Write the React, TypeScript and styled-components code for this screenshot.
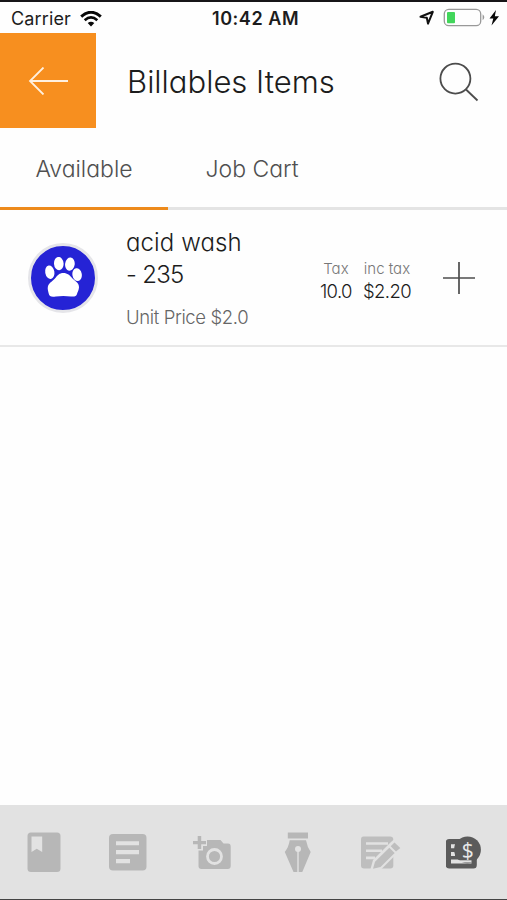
import React from 'react';
import styled, { createGlobalStyle } from 'styled-components';

const GlobalStyle = createGlobalStyle`
  *, *::before, *::after { box-sizing: border-box; }
  html, body { margin: 0; padding: 0; background: #fff; }
  body { font-family: Inter, "Liberation Sans", sans-serif; color: #1c1c1c; }
  button { border: 0; padding: 0; background: none; font: inherit; color: inherit; }
  svg { display: block; flex: none; }
`;

const Screen = styled.div`
  width: 507px;
  height: 900px;
  display: flex;
  flex-direction: column;
  overflow: hidden;
  background: #fefefe;
  border-top: 2px solid #171518;
  border-bottom: 1px solid #444;
  font-feature-settings: 'cv11' 1;
  white-space: nowrap;
`;

const StatusBar = styled.div`
  height: 31px;
  flex: none;
  display: grid;
  grid-template-columns: 1fr auto 1fr;
  align-items: center;
  padding: 0 7px 0 11px;
  font-feature-settings: normal;
`;

const Carrier = styled.div`
  display: flex;
  align-items: center;
  gap: 9px;
  font-size: 18px;
  line-height: 30px;
  padding-top: 1px;
  letter-spacing: 0.15px;
`;

const Clock = styled.div`
  font-size: 18px;
  line-height: 30px;
  padding-top: 2px;
  font-weight: 600;
  letter-spacing: 0.55px;
`;

const Indicators = styled.div`
  display: flex;
  justify-content: flex-end;
  align-items: center;
`;

const Header = styled.header`
  height: 95px;
  flex: none;
  display: flex;
  align-items: center;
`;

const BackButton = styled.button`
  width: 96px;
  height: 95px;
  background: #f78f1f;
  display: flex;
  align-items: center;
  justify-content: center;
`;

const Title = styled.h1`
  flex: 1;
  margin: 0 0 0 31px;
  padding-top: 2px;
  font-size: 31px;
  line-height: 40px;
  font-weight: 300;
`;

const SearchButton = styled.button`
  margin: 2px 28px 0 0;
`;

const Tabs = styled.nav`
  height: 82px;
  flex: none;
  display: flex;
  box-shadow: inset 0 -3px 0 #e4e4e4;
`;

const Tab = styled.button<{ $active?: boolean }>`
  width: 168px;
  height: 82px;
  padding-top: 2px;
  border-bottom: 3px solid ${(p) => (p.$active ? '#ed8a1b' : 'transparent')};
  color: #505050;
  font-size: 23px;
  line-height: 30px;
  font-weight: 300;
`;

const ItemRow = styled.article`
  height: 137px;
  flex: none;
  display: flex;
  align-items: center;
  padding: 0 32px 0 28px;
  border-bottom: 2px solid #e8e8e8;
`;

const Avatar = styled.div`
  width: 70px;
  height: 70px;
  border-radius: 50%;
  border: 3px solid #e5e5e9;
  background: #2523d5;
  display: flex;
  align-items: center;
  justify-content: center;
`;

const Description = styled.div`
  margin-left: 28px;
  width: 180px;
`;

const ItemName = styled.div`
  padding-top: 1px;
  font-size: 24px;
  line-height: 32px;
  font-weight: 300;
`;

const NameLine = styled.span<{ $spacing: number }>`
  display: block;
  letter-spacing: ${(p) => p.$spacing}px;
`;

const UnitPrice = styled.div`
  margin-top: 14px;
  font-size: 18.5px;
  line-height: 24px;
  font-weight: 300;
  color: #666;
  letter-spacing: -0.37px;
`;

const Amounts = styled.dl`
  margin: 6px 0 0;
  flex: 1;
  display: flex;
  justify-content: flex-end;
  gap: 11px;
`;

const Amount = styled.div`
  display: flex;
  flex-direction: column;
  align-items: center;
`;

const AmountLabel = styled.dt`
  font-size: 15px;
  line-height: 20px;
  font-weight: 300;
  color: #777;
`;

const AmountValue = styled.dd`
  margin: 0;
  font-size: 18.5px;
  line-height: 24px;
  font-weight: 300;
  letter-spacing: -0.6px;
`;

const AddButton = styled.button`
  margin-left: 32px;
`;

const Toolbar = styled.footer`
  height: 94px;
  flex: none;
  margin-top: auto;
  padding-left: 2px;
  display: grid;
  grid-template-columns: repeat(6, 1fr);
  background: #e2e2e2;
`;

const Tool = styled.button<{ $tone: string }>`
  display: flex;
  align-items: center;
  justify-content: center;
  color: ${(p) => p.$tone};
`;

const WifiIcon = () => (
  <svg width="22" height="16" viewBox="0 0 22 16" fill="none" stroke="#080808">
    <path d="M1.2 5.6 Q11 -3 20.8 5.6" strokeWidth="3" />
    <path d="M4.7 9.2 Q11 3.6 17.3 9.2" strokeWidth="2.7" />
    <path d="M7.7 12.1 Q11 9.2 14.3 12.1 L11 15.4 Z" fill="#080808" stroke="none" />
  </svg>
);

const StatusIcons = () => (
  <svg width="82" height="20" viewBox="418 8 82 20">
    <path d="M420.5 16.8 L432.8 11.8 L428 23.6 L426.8 17.8 Z" fill="none" stroke="#111" strokeWidth="2" strokeLinejoin="round" />
    <rect x="444.3" y="9.3" width="36.4" height="16.4" rx="4.5" fill="none" stroke="#999" strokeWidth="1.3" />
    <rect x="447" y="12" width="8" height="11.2" rx="1" fill="#42d65b" />
    <path d="M482.6 14.3 Q486 17.3 482.6 20.3 Z" fill="#999" />
    <path d="M496 10 L489.5 18.5 H493.3 L491.5 25.5 L499 16.2 H494.8 Z" fill="#080808" />
  </svg>
);

const ArrowIcon = () => (
  <svg width="40" height="28" viewBox="0 0 40 28" fill="none" stroke="#fff0df" strokeWidth="1.8">
    <path d="M15.5 .5 L2 14 L15.5 27.5 M2 14 H40.5" />
  </svg>
);

const SearchIcon = () => (
  <svg width="40" height="40" viewBox="0 0 40 40" fill="none" stroke="#4c4c4c" strokeWidth="1.8">
    <circle cx="16.4" cy="16.6" r="15" />
    <path d="M27 27.5 L38.5 38.5" />
  </svg>
);

const PawIcon = () => (
  <svg width="38" height="42" viewBox="44 257 38 42" fill="#fff">
    <ellipse cx="49.8" cy="272.2" rx="4.6" ry="6.8" transform="rotate(-10 49.8 272.2)" />
    <ellipse cx="58.8" cy="263.6" rx="4.8" ry="6.7" transform="rotate(-4 58.8 263.6)" />
    <ellipse cx="69.9" cy="264.1" rx="4.8" ry="6.6" transform="rotate(8 69.9 264.1)" />
    <ellipse cx="77.1" cy="274.6" rx="4.7" ry="6.4" transform="rotate(-10 77.1 274.6)" />
    <path d="M63.3 273 C67.5 273 70 275.5 72 278 C74.5 281 79.3 282.5 79 287.5 C78.7 290.5 77.5 292 77 294 C76.3 296.7 74 296.8 71 296.5 C66 295.8 60.5 295.8 55.8 296.5 C51.3 297.2 49.3 296.5 48.7 293.5 C48.2 291.3 47.3 289 47.9 286.5 C49 282.5 53 281 55.4 278 C57.5 275.3 59.5 273 63.3 273 Z" />
  </svg>
);

const PlusIcon = () => (
  <svg width="32" height="32" viewBox="0 0 32 32" stroke="#4d4d4d" strokeWidth="1.7">
    <path d="M16 0 V32 M0 16 H32" />
  </svg>
);

const JournalIcon = () => (
  <svg width="34" height="40" viewBox="26.5 832 34 40">
    <rect x="27" y="832.5" width="33" height="39.5" rx="3.5" fill="currentColor" />
    <path d="M31 836.5 H41.7 V852 L36.3 848.8 L31 852 Z" fill="#e2e2e2" />
  </svg>
);

const NotesIcon = () => (
  <svg width="38" height="38" viewBox="109 833 38 38">
    <rect x="109" y="834" width="37.5" height="36.5" rx="4" fill="currentColor" />
    <path d="M116 841.2 H139 V845.2 H116 Z M116 850 H139 V854.3 H116 Z M116 859 H130 V863.3 H116 Z" fill="#e2e2e2" />
  </svg>
);

const CameraIcon = () => (
  <svg width="38" height="36" viewBox="193 834 38 36">
    <path d="M207 840 H220.5 L223.5 843.5 H228 Q230.7 843.5 230.7 846.5 V866 Q230.7 869 227.7 869 H201.5 Q198.5 869 198.5 866 V850.5 H203 V846 H207 Z" fill="currentColor" />
    <path d="M197.7 836 H201.2 V841 H206 V844.3 H201.2 V849 H197.7 V844.3 H193 V841 H197.7 Z" fill="currentColor" />
    <circle cx="214.5" cy="856.5" r="7" fill="none" stroke="#e2e2e2" strokeWidth="2.8" />
  </svg>
);

const PenIcon = () => (
  <svg width="28" height="42" viewBox="283 831 28 42">
    <path d="M287.8 832.5 H308 V838.4 H287.8 Z M289.7 840.3 H306 Q307.2 847 310.7 852 L302.3 872 H293.5 L284.8 852 Q288.8 847 289.7 840.3 Z" fill="currentColor" />
    <circle cx="298" cy="849" r="3" fill="#e2e2e2" />
    <path d="M298 849 V872" stroke="#e2e2e2" strokeWidth="1.4" />
  </svg>
);

const EditIcon = () => (
  <svg width="40" height="36" viewBox="361 834.5 40 36">
    <path d="M363.5 837 H390 Q393.3 837 393.3 840 V866 Q393.3 869 390.3 869 H364 Q361 869 361 866 V840 Q361 837 363.5 837 Z" fill="currentColor" />
    <path d="M366 844 H388 M366 851.2 H382 M366 858.4 H375" stroke="#e2e2e2" strokeWidth="2.6" />
    <path d="M370.5 869.5 L373 860.5 L391 842.5 L394.5 839.5 L403 848 L381.5 869.5 Z" fill="#e2e2e2" />
    <path d="M373 869.2 L375 862.2 L389.3 848.2 L394.7 853.5 L380.5 867.6 Z M390.7 846.8 L394.5 843.1 L400.3 848.4 L396 852.1 Z" fill="currentColor" />
  </svg>
);

const DollarMark = styled.text`
  font: 500 21px 'Open Sans', sans-serif;
  fill: #e9e9e9;
`;

const BillingIcon = () => (
  <svg width="37" height="34" viewBox="447 833.5 37 34">
    <path d="M450 837.5 H474.5 V851 H477.8 V863.5 Q477.8 867 474.5 867 H450 Q446.7 867 446.7 863.5 V841 Q446.7 837.5 450 837.5 Z" fill="currentColor" />
    <path d="M452 842.8 H456 V846.8 H452 Z M452 850.5 H456 V854.5 H452 Z M452 858 H472.5 V862 H452 Z" fill="#e2e2e2" />
    <circle cx="468.5" cy="848.3" r="13.4" fill="currentColor" />
    <path d="M456 859.9 H472.5" stroke="#e2e2e2" strokeWidth="2.2" />
    <DollarMark x="468.7" y="856.2" textAnchor="middle">$</DollarMark>
  </svg>
);

const MUTED = '#b7b7b7';

const tools = [
  { name: 'Journal', Icon: JournalIcon, tone: MUTED },
  { name: 'Notes', Icon: NotesIcon, tone: MUTED },
  { name: 'Add photo', Icon: CameraIcon, tone: MUTED },
  { name: 'Signature', Icon: PenIcon, tone: MUTED },
  { name: 'Edit', Icon: EditIcon, tone: '#bebebe' },
  { name: 'Billables', Icon: BillingIcon, tone: '#5b5b5b' },
];

export default function App() {
  return (
    <>
      <GlobalStyle />
      <Screen>
        <StatusBar>
          <Carrier>Carrier <WifiIcon /></Carrier>
          <Clock>10:42 AM</Clock>
          <Indicators><StatusIcons /></Indicators>
        </StatusBar>
        <Header>
          <BackButton aria-label="Back"><ArrowIcon /></BackButton>
          <Title>Billables Items</Title>
          <SearchButton aria-label="Search"><SearchIcon /></SearchButton>
        </Header>
        <Tabs>
          <Tab $active>Available</Tab>
          <Tab>Job Cart</Tab>
        </Tabs>
        <ItemRow>
          <Avatar><PawIcon /></Avatar>
          <Description>
            <ItemName>
              <NameLine $spacing={0.1}>acid wash</NameLine>
              <NameLine $spacing={-0.7}>- 235</NameLine>
            </ItemName>
            <UnitPrice>Unit Price $2.0</UnitPrice>
          </Description>
          <Amounts>
            <Amount>
              <AmountLabel>Tax</AmountLabel>
              <AmountValue>10.0</AmountValue>
            </Amount>
            <Amount>
              <AmountLabel>inc tax</AmountLabel>
              <AmountValue>$2.20</AmountValue>
            </Amount>
          </Amounts>
          <AddButton aria-label="Add item"><PlusIcon /></AddButton>
        </ItemRow>
        <Toolbar>
          {tools.map(({ name, Icon, tone }) => (
            <Tool key={name} aria-label={name} $tone={tone}><Icon /></Tool>
          ))}
        </Toolbar>
      </Screen>
    </>
  );
}
